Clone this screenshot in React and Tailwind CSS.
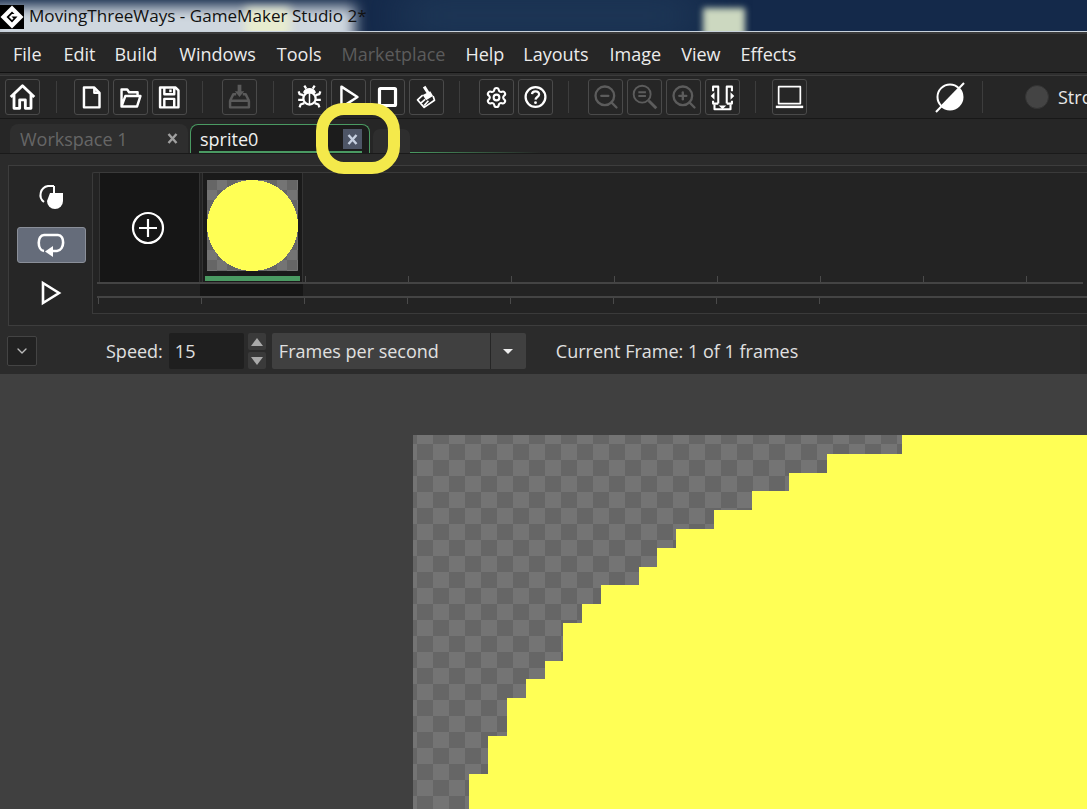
import { ZoomIn, ZoomOut, Settings, ChevronDown } from "lucide-react";

const menus = [
  ["File", "ml-[13px]"],
  ["Edit", "ml-[22px]"],
  ["Build", "ml-[19px]"],
  ["Windows", "ml-[22px]"],
  ["Tools", "ml-[21px]"],
  ["Marketplace", "ml-[20px] text-[#5c5c5c]"],
  ["Help", "ml-[20px]"],
  ["Layouts", "ml-[19px]"],
  ["Image", "ml-[21px]"],
  ["View", "ml-[20px]"],
  ["Effects", "ml-[20px]"],
];

function Btn({ className = "", children }) {
  return (
    <div className={`w-[35px] h-[36px] shrink-0 rounded-[3px] border border-[#4a4a4a] flex items-center justify-center ${className}`}>
      {children}
    </div>
  );
}

function Sep({ className = "" }) {
  return <div className={`w-px h-[32px] shrink-0 bg-[#3d3d3d] ${className}`} />;
}

function Ico({ children, stroke = "#fff", sw = 2.6 }) {
  return (
    <svg width="35" height="36" viewBox="0 0 35 36" fill="none" stroke={stroke} strokeWidth={sw} strokeLinejoin="round">
      {children}
    </svg>
  );
}

function CloseX({ color }) {
  return (
    <svg width="11" height="11" viewBox="0 0 11 11" stroke={color} strokeWidth="2.4">
      <path d="M1.5 1 L9.5 10 M9.5 1 L1.5 10" />
    </svg>
  );
}

function Toolbar() {
  return (
    <div className="h-[43px] shrink-0 flex items-center pl-[5px] bg-[#262626] border-b border-[#181818]">
      <Btn>
        <Ico sw={3}><path d="M5 18 L17.5 6 L30 18 M8.5 15 V30 H14.5 V21 H20.5 V30 H26.5 V15" /></Ico>
      </Btn>
      <Sep className="ml-[16px]" />
      <Btn className="ml-[17px]">
        <Ico><path d="M9.5 8 H20.5 L26 13.5 V29 H9.5 Z M20.5 8 V13.5 H26" /></Ico>
      </Btn>
      <Btn className="ml-[4px]">
        <Ico><path d="M8 28 V10 H14 L16 13 H25 V17 M8 28 L12 17 H28 L24.5 28 Z" /></Ico>
      </Btn>
      <Btn className="ml-[4px]">
        <Ico><path d="M7.5 8 H24 L27 11 V29 H7.5 Z M12 8 V15 H22.5 V8 M18.5 10 V13 M12 29 V20 H22.5 V29" /></Ico>
      </Btn>
      <Sep className="ml-[15px]" />
      <Btn className="ml-[19px]">
        <Ico stroke="#5a5a5a">
          <path d="M7.5 22 L11 15 H14 M27.5 22 L24 15 H21 M7.5 22 V29 H27.5 V22 Z" />
          <path d="M17.5 5 V13" strokeWidth="4" />
          <path d="M12.5 12 H22.5 L17.5 18 Z" fill="#5a5a5a" stroke="none" />
        </Ico>
      </Btn>
      <Sep className="ml-[16px]" />
      <Btn className="ml-[18px]">
        <Ico sw={2.4}>
          <path d="M12 13 A6 5.5 0 0 1 23 13 Z" fill="#fff" />
          <circle cx="17.5" cy="19.5" r="6.5" />
          <path d="M17.5 14 V26" strokeWidth="1.6" />
          <path d="M12 6 L14 9 M23 6 L21 9 M6 12 L7 15 L11 16 M29 12 L28 15 L24 16 M5.5 21 H11 M29.5 21 H24 M7 29 L8 26 L12 24.5 M28 29 L27 26 L23 24.5" />
        </Ico>
      </Btn>
      <Btn className="ml-[4px]">
        <Ico><path d="M10 7 L27 18 L10 29 Z" /></Ico>
      </Btn>
      <Btn className="ml-[4px]">
        <Ico sw={3.4}><rect x="9" y="9" width="17" height="18" rx="1" /></Ico>
      </Btn>
      <Btn className="ml-[4px]">
        <Ico sw={1.8}>
          <path d="M15 7 L19.5 14" strokeWidth="3.2" />
          <path d="M13.5 16 L21.5 12 L24.5 17 L17 21.5 Z" fill="#fff" stroke="none" />
          <path d="M13.5 16 L8 21 L15 29 L26 21.5 L24.5 17 M11.5 24.5 L16 20.5 M15 27 L19.5 22" />
        </Ico>
      </Btn>
      <Sep className="ml-[15px]" />
      <Btn className="ml-[19px]">
        <Settings size={23} color="#fff" strokeWidth={2.2} />
      </Btn>
      <Btn className="ml-[4px]">
        <Ico sw={2.4}>
          <circle cx="17.5" cy="18" r="10.5" />
          <path d="M13.8 15 C14 10.8 21.5 11 21.3 15.4 C21.2 18 17.6 18 17.5 20.8" />
          <circle cx="17.5" cy="24" r="1.5" fill="#fff" stroke="none" />
        </Ico>
      </Btn>
      <Sep className="ml-[15px]" />
      <Btn className="ml-[19px]">
        <ZoomOut size={28} color="#5c5c5c" strokeWidth={2} />
      </Btn>
      <Btn className="ml-[4px]">
        <Ico stroke="#5c5c5c" sw={2}>
          <circle cx="15" cy="15" r="9" />
          <path d="M22 22 L30 30" strokeWidth="3" />
          <path d="M11 13 H19 M11 17 H19" />
        </Ico>
      </Btn>
      <Btn className="ml-[4px]">
        <ZoomIn size={28} color="#5c5c5c" strokeWidth={2} />
      </Btn>
      <Btn className="ml-[4px]">
        <Ico sw={2.2}>
          <path d="M7.5 12 V7 H13 V25 M27.5 12 V7 H22 V25 M7.5 22 V25 H13 M27.5 22 V25 H22" />
          <path d="M9 13 V21 L5 17 Z M26 13 V21 L30 17 Z" fill="#fff" stroke="none" />
          <path d="M9 26 V31 H26 V26" />
          <path d="M13.5 27 H21.5 L17.5 31 Z" fill="#fff" stroke="none" />
        </Ico>
      </Btn>
      <Sep className="ml-[15px]" />
      <Btn className="ml-[16px]">
        <Ico sw={1.8}>
          <rect x="6" y="7" width="23" height="18" />
          <path d="M3 28.5 H32" strokeWidth="2.6" />
        </Ico>
      </Btn>
      <div className="ml-[127px] w-[32px] h-[32px] shrink-0">
        <svg width="32" height="32" viewBox="0 0 32 32">
          <circle cx="16" cy="16" r="12.5" fill="none" stroke="#fff" strokeWidth="2" />
          <path d="M25 7 A12.7 12.7 0 0 1 7 25 Z" fill="#fff" />
          <path d="M2 31 L30 2" stroke="#fff" strokeWidth="2" />
        </svg>
      </div>
      <Sep className="ml-[16px]" />
      <div className="ml-[42px] w-[24px] h-[24px] shrink-0 rounded-full bg-[#444] border border-[#333]" />
      <span className="ml-[9px] text-[18px] text-[#e8e8e8] whitespace-nowrap">Stroke</span>
    </div>
  );
}

function Tabs() {
  return (
    <div className="h-[35px] shrink-0 flex items-end bg-[#262626] pl-[10px] border-b border-[#1a1a1a]">
      <div className="w-[178px] h-[29px] rounded-t-[8px] bg-[#2e2e2e] flex items-center pl-[10px] pr-[10px] justify-between">
        <span className="text-[18px] text-[#666] pt-[1px]">Workspace 1</span>
        <CloseX color="#a0a0a0" />
      </div>
      <div className="ml-[2px] w-[180px] h-[29px] rounded-t-[8px] border-x border-t border-[#4a9a62] bg-[#1c1c1c] flex items-center justify-between pl-[9px] pr-[7px] relative">
        <span className="text-[18px] text-[#f0f0f0]">sprite0</span>
        <div className="w-[19px] h-[20px] bg-[#4d5566] flex items-center justify-center">
          <CloseX color="#c6d0e0" />
        </div>
        <div className="absolute left-[8px] right-[7px] bottom-0 h-[2px] bg-[#4a9a62]" />
      </div>
      <div className="ml-[3px] w-[37px] h-[24px] rounded-t-[7px] bg-[#2e2e2e]" />
      <div className="w-[130px] h-px bg-gradient-to-r from-[#4a9a62] to-transparent" />
    </div>
  );
}

function Ruler({ className = "" }) {
  return (
    <div className={`flex ${className}`}>
      {Array.from({ length: 8 }).map((_, i) => (
        <div key={i} className="w-[103px] h-[6px] shrink-0 border-l border-[#4a4a4a]" />
      ))}
    </div>
  );
}

function Timeline() {
  return (
    <div className="h-[172px] shrink-0 bg-[#2b2b2b] pt-[11px] pl-[8px]">
      <div className="h-[161px] flex border-l border-t border-b border-[#3d3d3d] bg-[#262626]">
        <div className="w-[83px] flex flex-col items-center shrink-0">
          <div className="mt-[15px] h-[30px]">
            <svg width="30" height="30" viewBox="0 0 30 30">
              <path d="M18 5 H12 A9 9 0 0 0 8 21" fill="none" stroke="#fff" strokeWidth="2" />
              <path d="M14 12 H27 V20 A8 8 0 0 1 11 20 Z" fill="#fff" />
              <path d="M18 5 V12" stroke="#fff" strokeWidth="2" />
            </svg>
          </div>
          <div className="mt-[16px] ml-[1px] w-[69px] h-[36px] rounded-[3px] border border-[#8a8f99] bg-[#656c7a] flex items-center justify-center">
            <svg width="30" height="28" viewBox="0 0 30 28" fill="none" stroke="#fff" strokeWidth="2.6">
              <path d="M8 20 C1 19 1 4 8 4 H22 C29 4 29 19 21 20 H15" />
              <path d="M17 15 V26 L9 20.5 Z" fill="#fff" stroke="none" />
            </svg>
          </div>
          <div className="mt-[17px]">
            <svg width="22" height="26" viewBox="0 0 22 26" fill="none" stroke="#fff" strokeWidth="2.6">
              <path d="M3 3 L19 13 L3 23 Z" />
            </svg>
          </div>
        </div>
        <div className="mt-[6px] h-[142px] flex-1 rounded-tl-[2px] bg-[#232323] border-l border-t border-b border-[#3a3a3a] overflow-hidden">
          <div className="flex pl-[6px]">
            <div className="w-[101px] h-[109px] shrink-0 bg-[#161616] border-x border-[#333] flex items-center justify-center pr-[4px]">
              <svg width="34" height="34" viewBox="0 0 34 34" fill="none" stroke="#fff" strokeWidth="2.2">
                <circle cx="17" cy="17" r="15" />
                <path d="M17 8 V26 M8 17 H26" />
              </svg>
            </div>
            <div className="ml-[2px] w-[101px] h-[109px] shrink-0 bg-[#1a1a1a] border-x border-[#333] flex flex-col items-center">
              <div className="mt-[7px] w-[91px] h-[91px] bg-[image:repeating-conic-gradient(#747474_0_25%,#666_0_50%)] bg-[length:20px_20px]">
                <svg width="91" height="91" viewBox="0 0 91 91" shapeRendering="crispEdges" className="block">
                  <circle cx="45.5" cy="45.5" r="45.5" fill="#ffff55" />
                </svg>
              </div>
              <div className="mt-[5px] w-[95px] h-[5px] bg-[#4a9a62]" />
            </div>
            <Ruler className="ml-[2px] self-end" />
          </div>
          <div className="h-[2px] mx-[4px] bg-[#444]" />
          <div className="ml-[107px] w-[103px] h-[12px] bg-[#161616]" />
          <div className="h-[2px] ml-[4px] bg-[#444]" />
          <Ruler className="ml-[5px]" />
        </div>
      </div>
    </div>
  );
}

function SpeedBar() {
  return (
    <div className="h-[48px] shrink-0 flex items-center bg-[#2b2b2b] pl-[7px] pt-[2px] text-[18px] text-[#e0e0e0]">
      <div className="w-[30px] h-[30px] shrink-0 rounded-[2px] border border-[#444] bg-[#222] flex items-center justify-center">
        <ChevronDown size={16} color="#bbb" />
      </div>
      <span className="ml-[69px]">Speed:</span>
      <div className="ml-[6px] w-[75px] h-[36px] shrink-0 bg-[#1f1f1f] rounded-[2px] flex items-center pl-[6px]">15</div>
      <div className="ml-[4px] w-[18px] shrink-0 flex flex-col gap-[2px]">
        <div className="h-[17px] bg-[#3a3a3a] rounded-[2px] flex items-center justify-center">
          <svg width="12" height="8" viewBox="0 0 12 8"><path d="M6 0 L12 8 H0 Z" fill="#aaa" /></svg>
        </div>
        <div className="h-[17px] bg-[#3a3a3a] rounded-[2px] flex items-center justify-center">
          <svg width="12" height="8" viewBox="0 0 12 8"><path d="M0 0 H12 L6 8 Z" fill="#aaa" /></svg>
        </div>
      </div>
      <div className="ml-[6px] w-[254px] h-[36px] shrink-0 flex rounded-[2px] bg-[#404040]">
        <div className="w-[219px] flex items-center pl-[7px] border-r border-[#262626]">Frames per second</div>
        <div className="flex-1 flex items-center justify-center">
          <svg width="10" height="5" viewBox="0 0 10 5"><path d="M0 0 H10 L5 5 Z" fill="#eee" /></svg>
        </div>
      </div>
      <span className="ml-[30px] whitespace-nowrap">Current Frame: 1 of 1 frames</span>
    </div>
  );
}

function Canvas() {
  return (
    <div className="flex-1 min-h-0 bg-[#404040] pl-[413px] pt-[61px]">
      <div className="w-full h-full bg-[image:repeating-conic-gradient(#747474_0_25%,#666_0_50%)] bg-[length:32px_32px] bg-[position:4px_9px]">
        <svg className="block w-full h-full" viewBox="413 435 674 374" shapeRendering="crispEdges">
          <polygon
            fill="#ffff55"
            points="469,809 469,774 488,774 488,736 507,736 507,698 526,698 526,679 545,679 545,661 563,661 563,623 582,623 582,604 601,604 601,585 639,585 639,567 657,567 657,548 676,548 676,529 714,529 714,510 752,510 752,491 789,491 789,473 827,473 827,454 902,454 902,435 1087,435 1087,809"
          />
        </svg>
      </div>
    </div>
  );
}

export default function App() {
  return (
    <div className="w-[1087px] h-[809px] overflow-hidden relative flex flex-col bg-[#262626] font-['Open_Sans',sans-serif]">
      {/* barra de titulo con el fondo de escritorio borroso */}
      <div className="h-[31px] shrink-0 relative overflow-hidden bg-[#14294a] flex items-center">
        <div className="absolute left-[-10px] top-[6px] w-[365px] h-[40px] bg-[#cfd7df] blur-[7px]" />
        <div className="absolute left-[245px] top-[8px] w-[45px] h-[30px] bg-[#e8eccf] blur-[5px]" />
        <div className="absolute left-[400px] top-[0px] w-[300px] h-[31px] bg-[#24405e] blur-[24px]" />
        <div className="absolute left-[703px] top-[8px] w-[42px] h-[30px] bg-[#ccd8c0] blur-[3px]" />
        <div className="relative w-[24px] h-[24px] mt-[2px] bg-black">
          <svg width="24" height="24" viewBox="0 0 24 24" className="block">
            <path d="M12 0.5 L23.5 12 L12 23.5 L0.5 12 Z" fill="#fff" />
            <path d="M12 6.5 L14.5 9 L12 9 L9 12 L12 15 L13.5 13.5 L11.5 11.5 H17.5 L12 17.5 L6.5 12 Z" fill="#000" />
          </svg>
        </div>
        <span className="relative ml-[5px] text-[17.1px] text-[#111] whitespace-nowrap">MovingThreeWays - GameMaker Studio 2*</span>
      </div>
      <div className="h-px shrink-0 bg-[#c8d2dc]" />
      <div className="h-[2px] shrink-0 bg-[#3a3a3a]" />
      <div className="h-[39px] shrink-0 flex items-center pt-[2px] bg-[#262626] text-[18px] text-[#ececec] border-b border-[#111]">
        {menus.map(([label, cls]) => (
          <span key={label} className={cls}>{label}</span>
        ))}
      </div>
      <div className="h-[3px] shrink-0 bg-[#2e2e2e] border-b border-[#3c3c3c]" />
      <Toolbar />
      <Tabs />
      <Timeline />
      <SpeedBar />
      <Canvas />
      {/* aro amarillo de la anotacion */}
      <div className="absolute left-[316px] top-[103px] w-[84px] h-[71px] rounded-[28px] border-[12px] border-[#f4e94b]" />
    </div>
  );
}
